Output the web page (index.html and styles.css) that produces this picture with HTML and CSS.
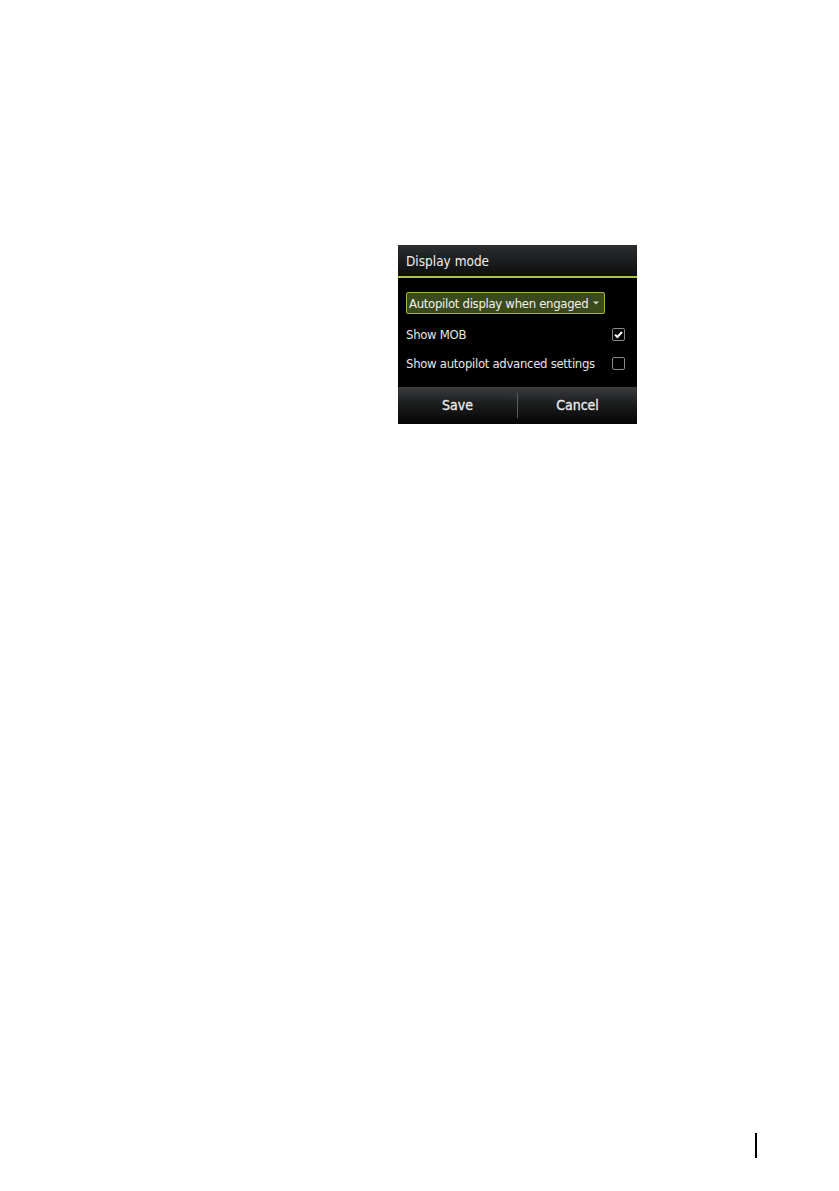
FILE: index.html
```html
<!DOCTYPE html>
<html>
<head>
<meta charset="utf-8">
<link rel="stylesheet" href="styles.css">
</head>
<body>
<div class="page">
  <div class="dialog">
    <div class="dlg-header">Display mode</div>
    <div class="dlg-body">
      <div class="dropdown">
        <span class="dd-text">Autopilot display when engaged</span>
        <svg class="caret" width="6" height="4" viewBox="0 0 6 4"><path d="M0 0.5 L6 0.5 L3 3.5 Z" fill="#d8d8c8"/></svg>
      </div>
      <div class="row">
        <span class="label">Show MOB</span>
        <span class="checkbox">
          <svg width="11" height="11" viewBox="0 0 11 11"><path d="M2 5.6 L4.4 8 L9 3" fill="none" stroke="#fff" stroke-width="2"/></svg>
        </span>
      </div>
      <div class="row">
        <span class="label">Show autopilot advanced settings</span>
        <span class="checkbox"></span>
      </div>
    </div>
    <div class="dlg-buttons">
      <div class="btn">Save</div>
      <div class="sep"></div>
      <div class="btn">Cancel</div>
    </div>
  </div>
  <div class="page-mark"></div>
</div>
</body>
</html>
```
FILE: styles.css
```css
html, body {
  margin: 0;
  padding: 0;
  background: #ffffff;
}
.page {
  width: 839px;
  height: 1191px;
  overflow: hidden;
  padding-top: 245px;
  box-sizing: border-box;
}
.dialog {
  margin-left: 398px;
  width: 239px;
  height: 179px;
  background: #000;
  display: flex;
  flex-direction: column;
  font-family: "DejaVu Sans Condensed", "Liberation Sans Narrow", "Open Sans", sans-serif;
  color: #e6e6e6;
  white-space: nowrap;
}
.dlg-header {
  height: 33px;
  box-sizing: border-box;
  padding-left: 8px;
  padding-top: 2px;
  line-height: 29px;
  font-size: 13.5px;
  background: linear-gradient(#2c2d2f, #161718 70%, #0e0e0e);
  border-bottom: 2px solid #b3c03a;
  color: #f0f0f0;
}
.dlg-body {
  flex: 1;
  padding: 14px 12px 0 8px;
  display: flex;
  flex-direction: column;
}
.dropdown {
  height: 22px;
  width: 199px;
  box-sizing: border-box;
  border: 1px solid #a9b53a;
  border-radius: 2px;
  background: #3a4a1c;
  display: flex;
  align-items: center;
  padding-left: 2px;
  font-size: 13px;
  color: #f2f2e8;
}
.dd-text {
  flex: 1;
  letter-spacing: -0.3px;
}
.caret {
  margin-right: 5px;
}
.dropdown + .row {
  margin-top: 6px;
}
.row {
  height: 29px;
  display: flex;
  align-items: center;
  justify-content: space-between;
  font-size: 13px;
}
.label {
  letter-spacing: -0.3px;
}
.checkbox {
  width: 13px;
  height: 13px;
  box-sizing: border-box;
  border: 1px solid #8a8a8a;
  border-radius: 2px;
  display: flex;
  align-items: center;
  justify-content: center;
}
.checkbox svg {
  display: block;
}
.dlg-buttons {
  height: 37px;
  display: flex;
  align-items: center;
  background: linear-gradient(#3a3c3e, #1c1d1e 45%, #050505);
}
.btn {
  flex: 1;
  text-align: center;
  font-size: 14px;
  color: #ececec;
  line-height: 37px;
  -webkit-text-stroke: 0.3px #ececec;
}
.sep {
  width: 1px;
  height: 25px;
  background: #5a5c5e;
}
.page-mark {
  margin-top: 709px;
  margin-left: 755px;
  width: 2px;
  height: 25px;
  background: #000;
}
```
